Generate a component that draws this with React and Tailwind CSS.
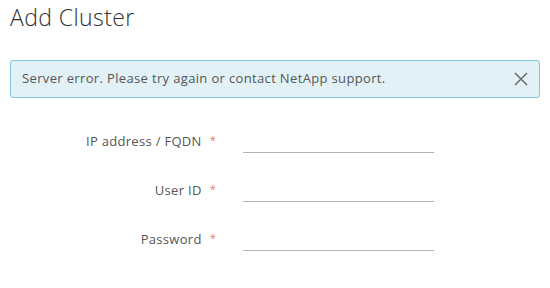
import React from "react";

const fields = ["IP address / FQDN", "User ID", "Password"];

export default function App() {
  return (
    <div
      className="w-[550px] h-[288px] bg-white"
      style={{ fontFamily: "'Open Sans', Lato, sans-serif" }}
    >
      <div className="pt-[2px] pl-[10px]">
        <h1 className="text-[23px] leading-[30px] font-light tracking-[0.4px] text-[#313131]">Add Cluster</h1>
      </div>

      <div className="mt-[28px] mx-[10px] h-[38px] flex items-center justify-between rounded-[3px] border border-[#7fc6e3] bg-[#e1f1f6] pl-[11px] pr-[10px]">
        <span className="text-[13px] tracking-[0.35px] text-[#565656]">Server error. Please try again or contact NetApp support.</span>
        <button className="text-[#6b6b6b]">
          <svg width="16" height="16" viewBox="0 0 16 16" fill="none" stroke="currentColor" strokeWidth="1.5">
            <path d="M2 2 L14 14 M14 2 L2 14" />
          </svg>
        </button>
      </div>

      <div className="mt-[31px] flex flex-col gap-[25px]">
        {fields.map((f) => (
          <div key={f} className="flex items-start h-[24px]">
            <label className="w-[220px] pt-[3px] text-right text-[13px] tracking-[0.3px] text-[#565656] pr-[4px]">
              {f}
              <span className="inline-block align-top text-[11px] text-[#d88079] ml-[8px]">*</span>
            </label>
            <div className="ml-[23px] w-[191px] h-[24px] border-b border-[#b3b3b3]" />
          </div>
        ))}
      </div>
    </div>
  );
}
